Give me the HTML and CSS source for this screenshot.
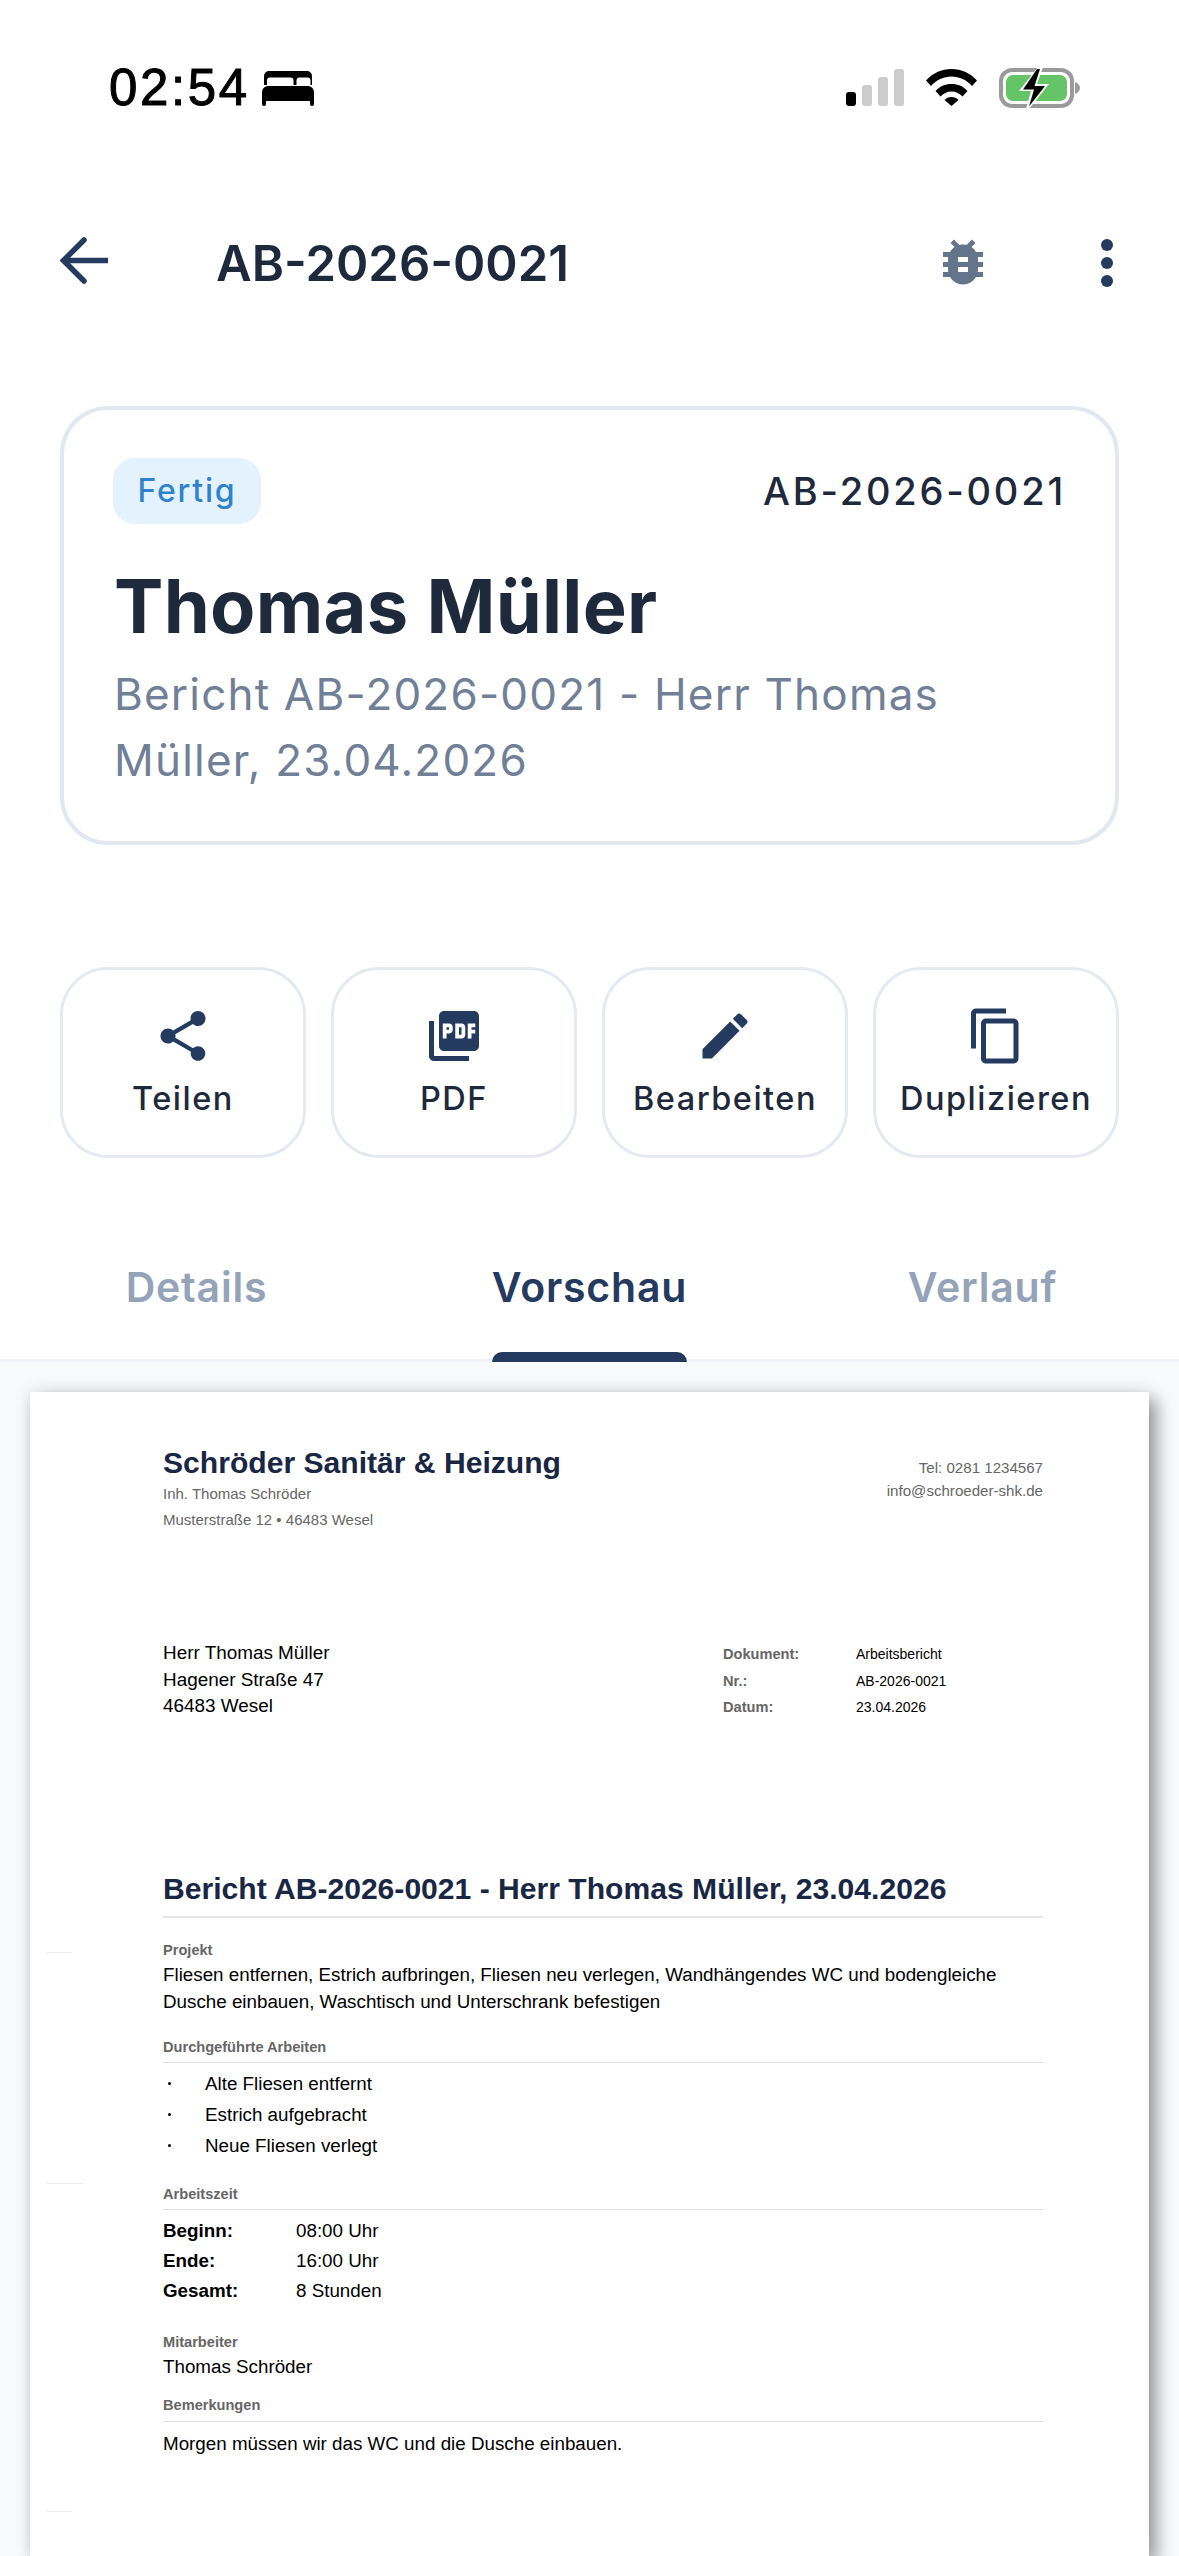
FILE: index.html
```html
<!DOCTYPE html>
<html lang="de">
	<head>
		<meta charset="UTF-8">
		<title>AB-2026-0021</title>
		<link rel="stylesheet" href="styles.css">
	</head>
	<body>
		<div class="statusBar">
			<div class="statusLeft">
				<span class="clock">02:54</span>
				<svg class="bedIcon" viewBox="0 0 52 35"><path d="M7 0h38a5 5 0 0 1 5 5v9h-1.500V9.500a3 3 0 0 0-3-3h-8a3 3 0 0 0-3 3V14h-3V9.500a3 3 0 0 0-3-3H8a3 3 0 0 0-3 3V14H2V5a5 5 0 0 1 5-5z"/><path d="M6 15h40a6 6 0 0 1 6 6v12a2 2 0 0 1-4 0v-3H4v3a2 2 0 0 1-4 0V21a6 6 0 0 1 6-6z"/></svg>
			</div>
			<div class="statusRight">
				<div class="signal">
					<span class="bar barOn"></span>
					<span class="bar bar2"></span>
					<span class="bar bar3"></span>
					<span class="bar bar4"></span>
				</div>
				<svg class="wifiIcon" viewBox="0 0 51 37"><path d="M0 11.500C6.500 4.200 15.500 0 25.500 0S44.500 4.200 51 11.500l-5 5.500C40.500 11 33.500 7.500 25.500 7.500S10.500 11 5 17z"/><path d="M9.500 22C13.500 17.500 19 15 25.500 15s12 2.500 16 7l-5 5.500c-2.800-3-6.500-5-11-5s-8.200 2-11 5z"/><path d="M18.500 31c1.800-1.900 4.200-3 7-3s5.200 1.100 7 3l-7 6z"/></svg>
				<svg class="batteryIcon" viewBox="0 0 82 42"><rect x="2" y="3" width="71" height="36" rx="11" fill="none" stroke="#9a9a9a" stroke-width="4"/><path d="M76 15c3 1 5 3.500 5 6s-2 5-5 6z" fill="#9a9a9a"/><rect x="7" y="8" width="61" height="26" rx="7" fill="#65c466"/><path d="M39 0L20 24h12l-5 18 3 0 20-25H38L44 0z" fill="#fff"/><path d="M38 2L24 22.500h11l-5 17L46 19H35.500L41 2z"/></svg>
			</div>
		</div>

		<div class="appBar">
			<svg class="backIcon" viewBox="0 0 50 48"><path d="M24 3L3.500 23.500 24 44" fill="none" stroke="#243a5e" stroke-width="5.500" stroke-linecap="round"/><path d="M6 23.500h42" fill="none" stroke="#243a5e" stroke-width="5.500"/></svg>
			<h1 class="appTitle">AB-2026-0021</h1>
			<svg class="bugIcon" viewBox="0 0 24 24"><path d="M20 8h-2.810c-.45-.78-1.070-1.450-1.820-1.960L17 4.410 15.590 3l-2.170 2.170C12.960 5.060 12.490 5 12 5c-.49 0-.96.06-1.410.17L8.410 3 7 4.410l1.620 1.630C7.880 6.550 7.260 7.220 6.810 8H4v2h2.090c-.05.33-.09.66-.09 1v1H4v2h2v1c0 .34.04.67.09 1H4v2h2.810c1.040 1.790 2.970 3 5.190 3s4.150-1.210 5.190-3H20v-2h-2.090c.05-.33.09-.66.09-1v-1h2v-2h-2v-1c0-.34-.04-.67-.09-1H20V8zm-6 8h-4v-2h4v2zm0-4h-4v-2h4v2z"/></svg>
			<div class="moreDots"><span></span><span></span><span></span></div>
		</div>

		<section class="summaryCard">
			<div class="summaryTop">
				<span class="statusBadge">Fertig</span>
				<span class="summaryNumber">AB-2026-0021</span>
			</div>
			<h2 class="customerName">Thomas Müller</h2>
			<p class="summaryText">Bericht AB-2026-0021 - Herr Thomas Müller, 23.04.2026</p>
		</section>

		<div class="actions">
			<div class="actionBtn">
				<svg viewBox="0 0 24 24"><path d="M18 16.080c-.76 0-1.440.3-1.960.77L8.910 12.700c.05-.23.09-.46.09-.7s-.04-.47-.09-.7l7.050-4.110c.54.5 1.250.81 2.040.81 1.660 0 3-1.340 3-3s-1.340-3-3-3-3 1.340-3 3c0 .24.04.47.09.7L8.040 9.810C7.500 9.310 6.790 9 6 9c-1.660 0-3 1.340-3 3s1.340 3 3 3c.79 0 1.500-.31 2.040-.81l7.120 4.160c-.05.21-.08.43-.08.65 0 1.610 1.310 2.920 2.920 2.920 1.610 0 2.920-1.310 2.920-2.920s-1.310-2.920-2.920-2.920z"/></svg>
				<span>Teilen</span>
			</div>
			<div class="actionBtn">
				<svg viewBox="0 0 24 24"><path d="M20 2H8c-1.100 0-2 .9-2 2v12c0 1.100.9 2 2 2h12c1.100 0 2-.9 2-2V4c0-1.100-.9-2-2-2zm-8.500 7.500c0 .83-.67 1.500-1.500 1.500H9v2H7.500V7H10c.83 0 1.500.67 1.500 1.500v1zm5 2c0 .83-.67 1.500-1.500 1.500h-2.500V7H15c.83 0 1.500.67 1.500 1.500v3zm4-3H19v1h1.500V11H19v2h-1.500V7h3v1.500zM9 9.500h1v-1H9v1zM4 6H2v14c0 1.100.9 2 2 2h14v-2H4V6zm10 5.500h1v-3h-1v3z"/></svg>
				<span>PDF</span>
			</div>
			<div class="actionBtn">
				<svg viewBox="0 0 24 24"><path d="M3 17.250V21h3.750L17.810 9.940l-3.750-3.750L3 17.250zM20.710 7.040c.39-.39.39-1.020 0-1.410l-2.340-2.340c-.39-.39-1.020-.39-1.410 0l-1.830 1.830 3.750 3.750 1.830-1.830z"/></svg>
				<span>Bearbeiten</span>
			</div>
			<div class="actionBtn">
				<svg viewBox="0 0 24 24"><path d="M16 1H4c-1.100 0-2 .9-2 2v14h2V3h12V1zm3 4H8c-1.100 0-2 .9-2 2v14c0 1.100.9 2 2 2h11c1.100 0 2-.9 2-2V7c0-1.100-.9-2-2-2zm0 16H8V7h11v14z"/></svg>
				<span>Duplizieren</span>
			</div>
		</div>

		<div class="tabs">
			<div class="tab">Details</div>
			<div class="tab tabActive">Vorschau</div>
			<div class="tab">Verlauf</div>
		</div>

		<div class="preview">
			<i class="foldMark foldA"></i>
			<i class="foldMark foldB"></i>
			<i class="foldMark foldC"></i>
			<article class="sheet">
				<header class="sheetHead">
					<div>
						<div class="company">Schröder Sanitär &amp; Heizung</div>
						<div class="companyLine">Inh. Thomas Schröder</div>
						<div class="companyLine">Musterstraße 12 • 46483 Wesel</div>
					</div>
					<div class="contact">
						<div>Tel: 0281 1234567</div>
						<div>info@schroeder-shk.de</div>
					</div>
				</header>

				<div class="addressRow">
					<div class="address">
						<div>Herr Thomas Müller</div>
						<div>Hagener Straße 47</div>
						<div>46483 Wesel</div>
					</div>
					<dl class="meta">
						<dt>Dokument:</dt><dd>Arbeitsbericht</dd>
						<dt>Nr.:</dt><dd>AB-2026-0021</dd>
						<dt>Datum:</dt><dd>23.04.2026</dd>
					</dl>
				</div>

				<h3 class="reportTitle">Bericht AB-2026-0021 - Herr Thomas Müller, 23.04.2026</h3>

				<div class="label labelProjekt">Projekt</div>
				<p class="bodyText projectText">Fliesen entfernen, Estrich aufbringen, Fliesen neu verlegen, Wandhängendes WC und bodengleiche Dusche einbauen, Waschtisch und Unterschrank befestigen</p>

				<div class="label labelRuled labelArbeiten">Durchgeführte Arbeiten</div>
				<ul class="workList">
					<li>Alte Fliesen entfernt</li>
					<li>Estrich aufgebracht</li>
					<li>Neue Fliesen verlegt</li>
				</ul>

				<div class="label labelRuled labelZeit">Arbeitszeit</div>
				<div class="times">
					<b>Beginn:</b><span>08:00 Uhr</span>
					<b>Ende:</b><span>16:00 Uhr</span>
					<b>Gesamt:</b><span>8 Stunden</span>
				</div>

				<div class="label labelMitarbeiter">Mitarbeiter</div>
				<p class="bodyText nameText">Thomas Schröder</p>

				<div class="label labelRuled labelBemerkung">Bemerkungen</div>
				<p class="bodyText noteText">Morgen müssen wir das WC und die Dusche einbauen.</p>
			</article>
		</div>
	</body>
</html>
```

FILE: styles.css
```css
html, body {
	margin: 0;
	padding: 0;
}
body {
	width: 1179px;
	height: 2556px;
	overflow: hidden;
	background: #fff;
	font-family: 'Inter', sans-serif;
	color: #1e293b;
}

/* status bar */
.statusBar {
	height: 140px;
	display: flex;
	justify-content: space-between;
	padding: 68px 98px 0 109px;
	box-sizing: border-box;
}
.statusLeft {
	display: flex;
	align-items: flex-start;
	gap: 12px;
}
.clock {
	font-family: 'Liberation Sans', sans-serif;
	font-size: 51px;
	line-height: 39px;
	font-weight: 500;
	letter-spacing: 2.600px;
	color: #000;
	-webkit-text-stroke: 1px #000;
}
.bedIcon {
	width: 52px;
	height: 35px;
	margin-top: 3px;
}
.statusRight {
	display: flex;
	align-items: flex-start;
	gap: 22px;
}
.signal {
	display: flex;
	align-items: flex-end;
	gap: 6px;
	height: 38px;
}
.bar {
	width: 10px;
	border-radius: 3px;
	background: #cccccc;
}
.barOn {
	height: 14px;
	background: #000;
}
.bar2 { height: 21px; }
.bar3 { height: 29px; }
.bar4 { height: 37px; }
.wifiIcon {
	width: 51px;
	height: 37px;
	margin-top: 1px;
}
.batteryIcon {
	width: 82px;
	height: 42px;
	margin-top: -1px;
}

/* app bar */
.appBar {
	height: 246px;
	display: flex;
	align-items: center;
	padding: 0 66px 0 60px;
}
.backIcon {
	width: 50px;
	height: 48px;
	margin-top: -4px;
}
.appTitle {
	margin: 0 0 0 106px;
	font-size: 49px;
	font-weight: 600;
	color: #1e293b;
	flex: 1;
}
.bugIcon {
	width: 60px;
	height: 60px;
	fill: #64748b;
	margin: -3px 108px 0 0;
}
.moreDots {
	display: flex;
	flex-direction: column;
	gap: 6px;
}
.moreDots span {
	width: 12px;
	height: 12px;
	border-radius: 50%;
	background: #243a5e;
}

/* summary card */
.summaryCard {
	margin: 20px 60px 0;
	height: 439px;
	box-sizing: border-box;
	border: 4px solid #e2e8f0;
	border-radius: 48px;
	padding: 48px 49px 0 49px;
}
.summaryTop {
	display: flex;
	justify-content: space-between;
	align-items: center;
}
.statusBadge {
	width: 148px;
	height: 66px;
	line-height: 66px;
	text-align: center;
	background: #e3f2fd;
	border-radius: 22px;
	color: #3182ce;
	font-size: 32px;
	font-weight: 500;
	letter-spacing: 1.800px;
}
.summaryNumber {
	font-size: 38px;
	font-weight: 500;
	letter-spacing: 2.800px;
	color: #1e293b;
}
.customerName {
	margin: 38px 0 0 1px;
	font-size: 74px;
	line-height: 88px;
	font-weight: 700;
	letter-spacing: 0.300px;
	color: #1e293b;
}
.summaryText {
	margin: 11px 0 0 1px;
	font-size: 44px;
	line-height: 66px;
	font-weight: 400;
	letter-spacing: 1.200px;
	color: #718096;
}

/* action buttons */
.actions {
	margin: 122px 60px 0;
	display: grid;
	grid-template-columns: repeat(4, 1fr);
	gap: 25px;
}
.actionBtn {
	height: 191px;
	box-sizing: border-box;
	border: 3px solid #e5eaf1;
	border-radius: 48px;
	display: flex;
	flex-direction: column;
	align-items: center;
	padding-top: 36px;
	font-size: 32.500px;
	font-weight: 500;
	letter-spacing: 1.500px;
	color: #1e293b;
}
.actionBtn svg {
	width: 60px;
	height: 60px;
	fill: #243a5e;
	margin-bottom: 13px;
}

/* tabs */
.tabs {
	height: 201px;
	display: grid;
	grid-template-columns: repeat(3, 1fr);
	justify-items: center;
	position: relative;
	z-index: 1;
}
.tab {
	position: relative;
	height: 201px;
	box-sizing: border-box;
	padding-top: 102px;
	font-size: 41px;
	line-height: 54px;
	font-weight: 600;
	letter-spacing: 0.800px;
	color: #94a3b8;
}
.tabActive {
	color: #243a5e;
}
.tabActive::after {
	content: "";
	position: absolute;
	left: 0;
	right: 0;
	bottom: -3px;
	height: 10px;
	border-radius: 10px 10px 0 0;
	background: #243a5e;
}

/* document preview */
.preview {
	position: relative;
	height: 1197px;
	background: #f8fafc;
	border-top: 3px solid #f1f5f9;
	padding: 30px 30px 0;
	box-sizing: border-box;
}
.foldMark {
	position: absolute;
	left: 46px;
	width: 26px;
	height: 1px;
	background: #eeeeee;
	z-index: 1;
}
.foldA { top: 590px; }
.foldB { top: 821px; width: 37px; }
.foldC { top: 1149px; }
.sheet {
	height: 1164px;
	background: #fff;
	box-sizing: border-box;
	padding: 52px 106px 0 133px;
	box-shadow: 8px 8px 16px rgba(0, 0, 0, 0.35), 0 0 18px rgba(0, 0, 0, 0.12);
	font-family: 'Liberation Sans', sans-serif;
	color: #000;
}
.sheetHead {
	display: flex;
	justify-content: space-between;
}
.company {
	font-size: 30.100px;
	line-height: 37px;
	font-weight: 700;
	color: #1a2744;
}
.companyLine {
	font-size: 15px;
	line-height: 26px;
	color: #666;
}
.contact {
	margin-top: 12px;
	font-size: 15.100px;
	line-height: 23px;
	text-align: right;
	color: #666;
}
.addressRow {
	display: flex;
	justify-content: space-between;
	margin-top: 107px;
}
.address {
	font-size: 18.900px;
	line-height: 26.500px;
}
.meta {
	margin: 1px 0 0;
	width: 320px;
	display: grid;
	grid-template-columns: 133px 1fr;
	font-size: 14px;
	line-height: 26.500px;
}
.meta dt {
	font-size: 14.600px;
	font-weight: 700;
	color: #666;
}
.meta dd {
	margin: 0;
}
.reportTitle {
	margin: 150px 0 0;
	padding-bottom: 9px;
	border-bottom: 2px solid #e5e5e5;
	font-size: 30.100px;
	line-height: 36px;
	font-weight: 700;
	color: #1a2744;
}
.label {
	font-size: 14.600px;
	line-height: 20px;
	font-weight: 700;
	color: #666;
}
.labelRuled {
	padding-bottom: 5px;
	border-bottom: 1px solid #dddddd;
}
.labelProjekt { margin-top: 22px; }
.labelArbeiten { margin-top: 22px; }
.labelZeit { margin-top: 23px; }
.labelMitarbeiter { margin-top: 25.500px; }
.labelBemerkung { margin-top: 15px; }
.labelBemerkung { padding-bottom: 6px; }
.bodyText {
	margin: 0;
	font-size: 18.800px;
	line-height: 27px;
}
.projectText { margin-top: 1px; }
.nameText { margin-top: 1px; }
.noteText {
	margin-top: 8px;
}
.workList {
	margin: 5px 0 0;
	padding: 0;
	list-style: none;
	font-size: 18.800px;
	line-height: 31px;
}
.workList li {
	padding-left: 42px;
	position: relative;
}
.workList li::before {
	content: "";
	position: absolute;
	left: 5px;
	top: 14px;
	width: 3px;
	height: 3px;
	border-radius: 50%;
	background: #000;
}
.times {
	margin-top: 6.500px;
	display: grid;
	grid-template-columns: 133px 1fr;
	font-size: 18.800px;
	line-height: 30px;
}
```
